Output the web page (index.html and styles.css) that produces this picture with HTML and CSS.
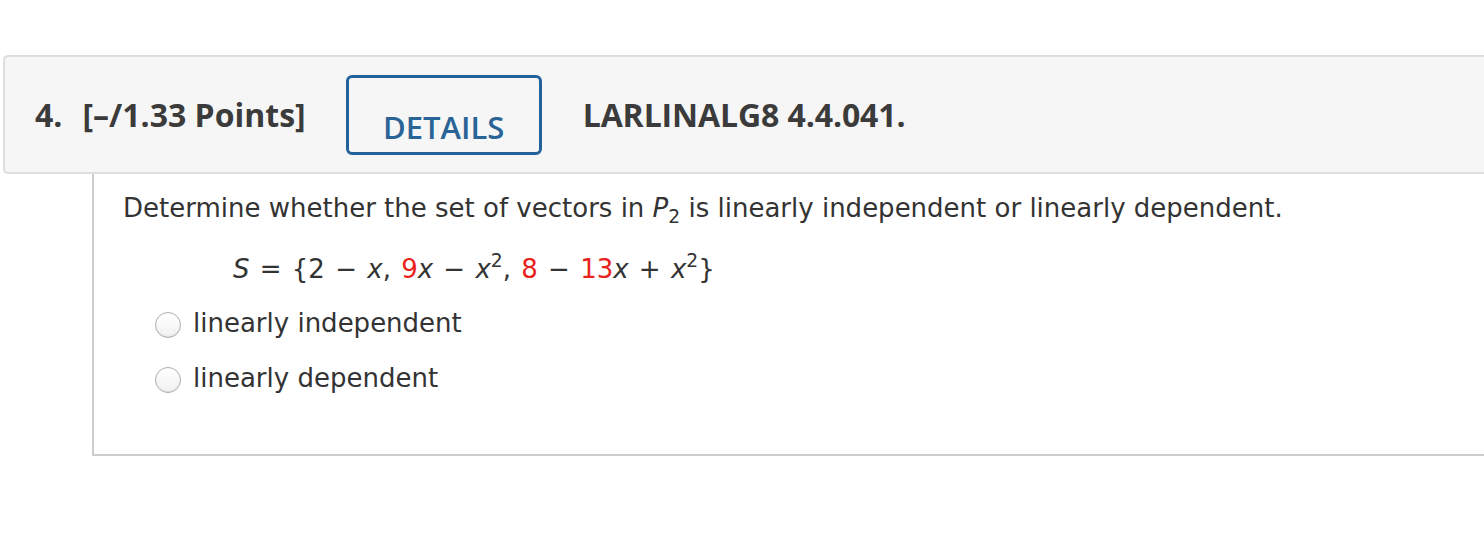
FILE: index.html
```html
<!DOCTYPE html>
<html>
<head>
<meta charset="utf-8">
<link rel="stylesheet" href="styles.css">
</head>
<body>
<div class="page">
  <div class="qhead">
    <span class="qnum">4.</span>
    <span class="qpts">[–/1.33 Points]</span>
    <button class="details">DETAILS</button>
    <span class="qid">LARLINALG8 4.4.041.</span>
  </div>
  <div class="qbody">
    <p class="prompt">Determine whether the set of vectors in <i>P</i><sub>2</sub> is linearly independent or linearly dependent.</p>
    <p class="math"><i>S</i> = {2 − <i>x</i>, <span class="red">9</span><i>x</i> − <i>x</i><sup>2</sup>, <span class="red">8</span> − <span class="red">13</span><i>x</i> + <i>x</i><sup>2</sup>}</p>
    <label class="opt"><input type="radio" name="a" class="radio"><span>linearly independent</span></label>
    <label class="opt"><input type="radio" name="a" class="radio"><span>linearly dependent</span></label>
  </div>
</div>
</body>
</html>
```
FILE: styles.css
```css
html, body {
  margin: 0;
  padding: 0;
  background: #fff;
}
.page {
  padding-top: 55px;
  padding-left: 3px;
}
.qhead {
  display: flex;
  align-items: center;
  height: 115px;
  background: #f6f6f6;
  border: 2px solid #dedede;
  border-right: none;
  border-radius: 5px 0 0 5px;
  padding-left: 30px;
  font-family: "Open Sans", sans-serif;
  font-weight: 700;
  color: #3b3b3b;
  font-size: 32px;
}
.qnum {
  margin-right: 20px;
}
.qpts {
  margin-right: 40px;
}
.details {
  box-sizing: border-box;
  width: 196px;
  height: 80px;
  border: 3px solid #23629a;
  border-radius: 6px;
  background: #f6f6f6;
  color: #2a6497;
  font-family: "Open Sans", sans-serif;
  font-weight: 600;
  font-size: 31px;
  padding: 24px 0 0 0;
  margin-right: 41px;
}
.qid {
  letter-spacing: -0.1px;
}
.qbody {
  margin-left: 89px;
  border-left: 2px solid #cccccc;
  border-bottom: 2px solid #cccccc;
  height: 280px;
  padding-left: 29px;
  font-family: "DejaVu Sans", Verdana, sans-serif;
  color: #333;
  font-size: 26px;
}
.prompt {
  margin: 0;
  padding-top: 19px;
}
.prompt sub {
  font-size: 72%;
  vertical-align: -6px;
  line-height: 0;
}
.math {
  margin: 31px 0 0 110px;
  word-spacing: 2px;
}
.math sup {
  font-size: 72%;
  vertical-align: 11px;
  line-height: 0;
}
.red {
  color: #e8231c;
}
.opt {
  display: flex;
  align-items: center;
  margin-top: 24px;
  margin-left: 32px;
}
.opt + .opt {
  margin-top: 25px;
}
.radio {
  appearance: none;
  -webkit-appearance: none;
  width: 26px;
  height: 26px;
  margin: 4px 12px 0 0;
  border-radius: 50%;
  border: 1px solid #adadad;
  background: linear-gradient(#ffffff, #f1f1f1);
  box-shadow: inset 0 -1px 1px rgba(0,0,0,0.08);
}
```
